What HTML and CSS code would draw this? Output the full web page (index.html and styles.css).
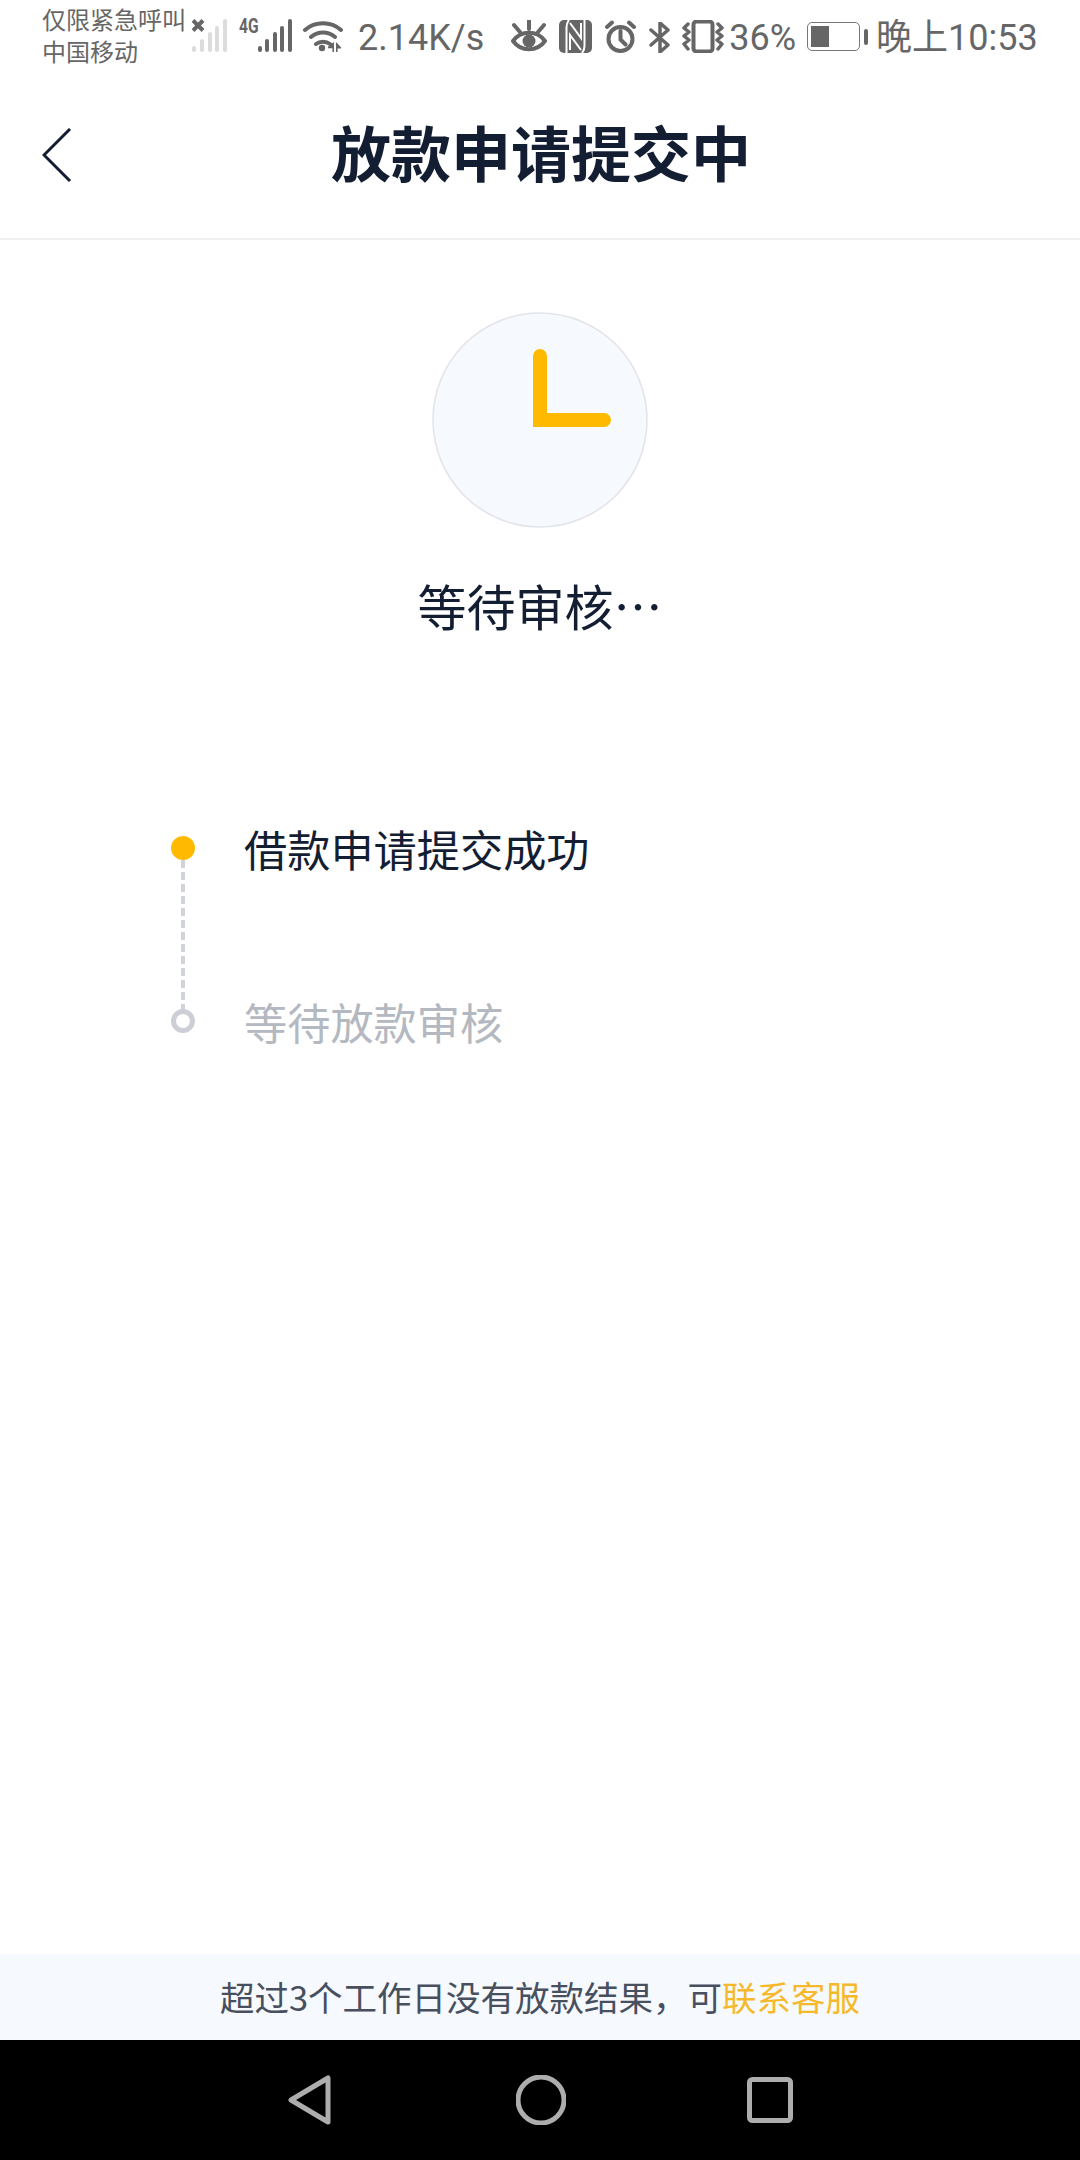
FILE: index.html
```html
<!DOCTYPE html>
<html lang="zh-CN">
<head>
    <meta charset="UTF-8">
    <meta name="viewport" content="width=device-width, initial-scale=1.0">
    <title>放款申请提交中</title>
    <link rel="stylesheet" href="styles.css">
</head>
<body>
    <div class="status-bar">
        <div class="carrier">
            <span>仅限紧急呼叫</span>
            <span>中国移动</span>
        </div>
        <svg class="icon-signal" viewBox="0 0 36 34">
            <path class="no-sim" d="M1 1.500l10 10M11 1.500l-10 10"/>
            <g class="bars-off">
                <rect x="0" y="27" width="4" height="6" rx="2"/>
                <rect x="8" y="20" width="4" height="13" rx="2"/>
                <rect x="16" y="13" width="4" height="20" rx="2"/>
                <rect x="23" y="7" width="4" height="26" rx="2"/>
                <rect x="31" y="0" width="4" height="33" rx="2"/>
            </g>
        </svg>
        <span class="net-type">4G</span>
        <svg class="icon-signal-on" viewBox="0 0 34 34">
            <g class="bars-on">
                <rect x="0" y="27" width="4" height="6" rx="2"/>
                <rect x="7" y="20" width="4" height="13" rx="2"/>
                <rect x="15" y="13" width="4" height="20" rx="2"/>
                <rect x="22" y="7" width="4" height="26" rx="2"/>
                <rect x="30" y="0" width="4" height="33" rx="2"/>
            </g>
        </svg>
        <svg class="icon-wifi" viewBox="0 0 40 32">
            <path class="line" d="M2 10C12 1 28 1 38 10M8 17c7-6 17-6 24 0M13 24c4-3 10-3 14 0"/>
            <circle class="solid" cx="19" cy="28" r="3.200"/>
            <path class="solid" d="M31 22v10h-1.600v-3.800H25v-1.400zM33 22l5 5.200v1.400h-3.400V32H33z"/>
        </svg>
        <span class="speed">2.14K/s</span>

        <svg class="icon-eye" viewBox="0 0 36 33">
            <path class="line" d="M2 21c8-11 24-11 32 0-8 11-24 11-32 0z"/>
            <circle class="solid" cx="18" cy="21" r="6.500"/>
            <path class="line" d="M18 1v8M3 5l6 7M33 5l-6 7"/>
        </svg>
        <svg class="icon-nfc" viewBox="0 0 33 33">
            <rect class="solid" width="33" height="33" rx="5"/>
            <path class="nfc-mark" d="M7.500 33V7c0-3 1-5 2.500-7M25.500 0v26c0 3-1 5-2.500 7M11 3l11 15V3M22 30L11 15v15"/>
        </svg>
        <svg class="icon-alarm" viewBox="0 0 33 33">
            <circle class="line" cx="16.500" cy="19" r="12"/>
            <path class="line" d="M16.500 11v8.500l5 5M3 7l5-4.500M30 7l-5-4.500"/>
        </svg>
        <svg class="icon-bluetooth" viewBox="0 0 22 31">
            <path class="thin" d="M2 8l17 15-8 7V1l8 7L2 23"/>
        </svg>
        <svg class="icon-vibrate" viewBox="0 0 42 33">
            <rect class="line" x="11.500" y="1.500" width="19" height="30" rx="3"/>
            <path class="thin" d="M6 4L2 8l5 4-5 4 5 4-5 4 4 5M36 4l4 4-5 4 5 4-5 4 5 4-4 5"/>
        </svg>
        <span class="battery-text">36%</span>
        <div class="battery">
            <div class="battery-body">
                <div class="battery-level"></div>
            </div>
            <div class="battery-tip"></div>
        </div>
        <span class="clock-text">晚上10:53</span>
    </div>

    <header class="title-bar">
        <svg class="back" viewBox="0 0 30 54">
            <path d="M28 1L2 27l26 26"/>
        </svg>
        <h1>放款申请提交中</h1>
    </header>

    <main>
        <div class="state">
            <svg class="state-clock" viewBox="0 0 216 216">
                <circle cx="108" cy="108" r="107"/>
                <path d="M101 44a7 7 0 0 1 14 0v57h57a7 7 0 0 1 0 14h-71z"/>
            </svg>
            <p class="state-text">等待审核…</p>
        </div>

        <ul class="steps">
            <li class="step done">
                <div class="rail">
                    <span class="dot"></span>
                    <span class="dash"></span>
                </div>
                <span class="step-text">借款申请提交成功</span>
            </li>
            <li class="step">
                <div class="rail">
                    <span class="dot"></span>
                </div>
                <span class="step-text">等待放款审核</span>
            </li>
        </ul>
    </main>

    <div class="tip">超过3个工作日没有放款结果，可<a href="#">联系客服</a></div>

    <nav class="nav-bar">
        <svg class="nav-back" viewBox="0 0 44 50">
            <path d="M40 3v44L3 25z"/>
        </svg>
        <svg class="nav-home" viewBox="0 0 50 50">
            <circle cx="25" cy="25" r="23"/>
        </svg>
        <svg class="nav-recent" viewBox="0 0 46 46">
            <rect x="2.500" y="2.500" width="41" height="41" rx="3"/>
        </svg>
    </nav>
</body>
</html>
```

FILE: styles.css
```css
* {
    box-sizing: border-box;
}
body {
    font-family: "Noto Sans CJK SC", "Noto Sans", sans-serif;
    background: white;
    margin: 0;
    height: 2160px;
    display: flex;
    flex-direction: column;
    color: #141e33;
}

/* status bar */
.status-bar {
    height: 70px;
    padding-left: 42px;
    display: flex;
    align-items: flex-start;
    color: #666;
    font-family: Roboto, "Noto Sans CJK SC", sans-serif;
    flex-shrink: 0;
}
.status-bar svg {
    flex-shrink: 0;
    display: block;
}
.line {
    fill: none;
    stroke: #666;
    stroke-width: 4;
    stroke-linecap: round;
    stroke-linejoin: round;
}
.thin {
    fill: none;
    stroke: #666;
    stroke-width: 3.500;
    stroke-linejoin: round;
    stroke-linecap: round;
}
.solid {
    fill: #666;
}
.carrier {
    width: 150px;
    margin-top: 3px;
    font-family: "Noto Sans CJK SC", sans-serif;
    font-size: 24px;
    line-height: 32px;
    display: flex;
    flex-direction: column;
}
.icon-signal {
    width: 36px;
    height: 34px;
    margin-top: 19px;
}
.no-sim {
    fill: none;
    stroke: #666;
    stroke-width: 4;
}
.bars-off rect {
    fill: #dcdcdc;
}
.bars-on rect {
    fill: #666;
}
.net-type {
    width: 19px;
    margin: 14px 0 0 11px;
    font-size: 20px;
    line-height: 24px;
    font-weight: 700;
    transform: scaleX(0.78);
    transform-origin: left;
}
.icon-signal-on {
    width: 34px;
    height: 34px;
    margin-top: 19px;
}
.icon-wifi {
    width: 40px;
    height: 32px;
    margin: 20px 0 0 11px;
}
.speed {
    margin: 15px 0 0 15px;
    font-size: 36px;
    line-height: 46px;
}
.icon-eye {
    width: 36px;
    height: 33px;
    margin: 20px 0 0 27px;
}
.icon-nfc {
    width: 33px;
    height: 33px;
    margin: 20px 0 0 12px;
}
.nfc-mark {
    fill: none;
    stroke: white;
    stroke-width: 2;
}
.icon-alarm {
    width: 33px;
    height: 33px;
    margin: 20px 0 0 12px;
}
.icon-bluetooth {
    width: 22px;
    height: 31px;
    margin: 22px 0 0 12px;
}
.icon-vibrate {
    width: 42px;
    height: 33px;
    margin: 20px 0 0 11px;
}
.battery-text {
    margin: 15px 0 0 5px;
    font-size: 36px;
    line-height: 46px;
}
.battery {
    margin: 22px 0 0 11px;
    display: flex;
    align-items: center;
    gap: 4px;
}
.battery-body {
    width: 53px;
    height: 29px;
    padding: 3px;
    border: 1.500px solid #777;
    border-radius: 5px;
}
.battery-level {
    width: 18px;
    height: 100%;
    background: #666;
}
.battery-tip {
    width: 4px;
    height: 16px;
    background: #666;
    border-radius: 2px;
}
.clock-text {
    margin: 15px 0 0 8px;
    font-size: 36px;
    line-height: 46px;
    white-space: nowrap;
}

/* title bar */
.title-bar {
    height: 170px;
    padding-left: 42px;
    border-bottom: 2px solid #eff0f2;
    display: flex;
    align-items: center;
    position: relative;
    flex-shrink: 0;
}
.back {
    width: 30px;
    height: 54px;
    margin-top: 1px;
}
.back path {
    fill: none;
    stroke: #141e33;
    stroke-width: 3;
}
.title-bar h1 {
    position: absolute;
    left: 2px;
    right: 0;
    margin: 0;
    font-size: 60px;
    line-height: 80px;
    font-weight: 700;
    text-align: center;
    top: 41px;
}

/* main part */
main {
    flex: 1;
}
.state {
    padding-top: 72px;
    display: flex;
    flex-direction: column;
    align-items: center;
}
.state-clock {
    width: 216px;
    height: 216px;
}
.state-clock circle {
    fill: #f6f9fd;
    stroke: #e2e4e9;
    stroke-width: 1.500;
}
.state-clock path {
    fill: #ffba00;
}
.state-text {
    margin: 42px 0 0;
    font-size: 49px;
    line-height: 70px;
}
.steps {
    list-style: none;
    margin: 186px 0 0;
    padding: 0 0 0 171px;
}
.step {
    display: flex;
    height: 173px;
    color: #b4b8c0;
}
.step.done {
    color: #141e33;
}
.rail {
    width: 24px;
    height: 174px;
    margin-top: 10px;
    display: flex;
    flex-direction: column;
    align-items: center;
}
.dot {
    width: 24px;
    height: 24px;
    border: 5px solid #cccfd6;
    border-radius: 50%;
    flex-shrink: 0;
}
.done .dot {
    border: none;
    background: #ffba00;
}
.dash {
    flex: 1;
    width: 4px;
    background: repeating-linear-gradient(#d0d3d9 0 8px, transparent 8px 12px);
}
.step-text {
    margin: -2px 0 0 49px;
    font-size: 43.200px;
    line-height: 48px;
}

/* bottom tip */
.tip {
    height: 86px;
    background: #f6f9fd;
    color: #48505f;
    font-size: 34.500px;
    line-height: 84px;
    text-align: center;
    flex-shrink: 0;
}
.tip a {
    color: #f6b92b;
    text-decoration: none;
}

/* system navigation */
.nav-bar {
    height: 120px;
    padding-top: 35px;
    background: black;
    display: flex;
    justify-content: center;
    align-items: flex-start;
    flex-shrink: 0;
}
.nav-bar svg {
    display: block;
    fill: none;
    stroke: #adadad;
    stroke-width: 5;
    stroke-linejoin: round;
}
.nav-back {
    width: 44px;
    height: 50px;
}
.nav-home {
    width: 50px;
    height: 50px;
    margin-left: 184px;
}
.nav-recent {
    width: 46px;
    height: 46px;
    margin: 2px 0 0 181px;
}
```
